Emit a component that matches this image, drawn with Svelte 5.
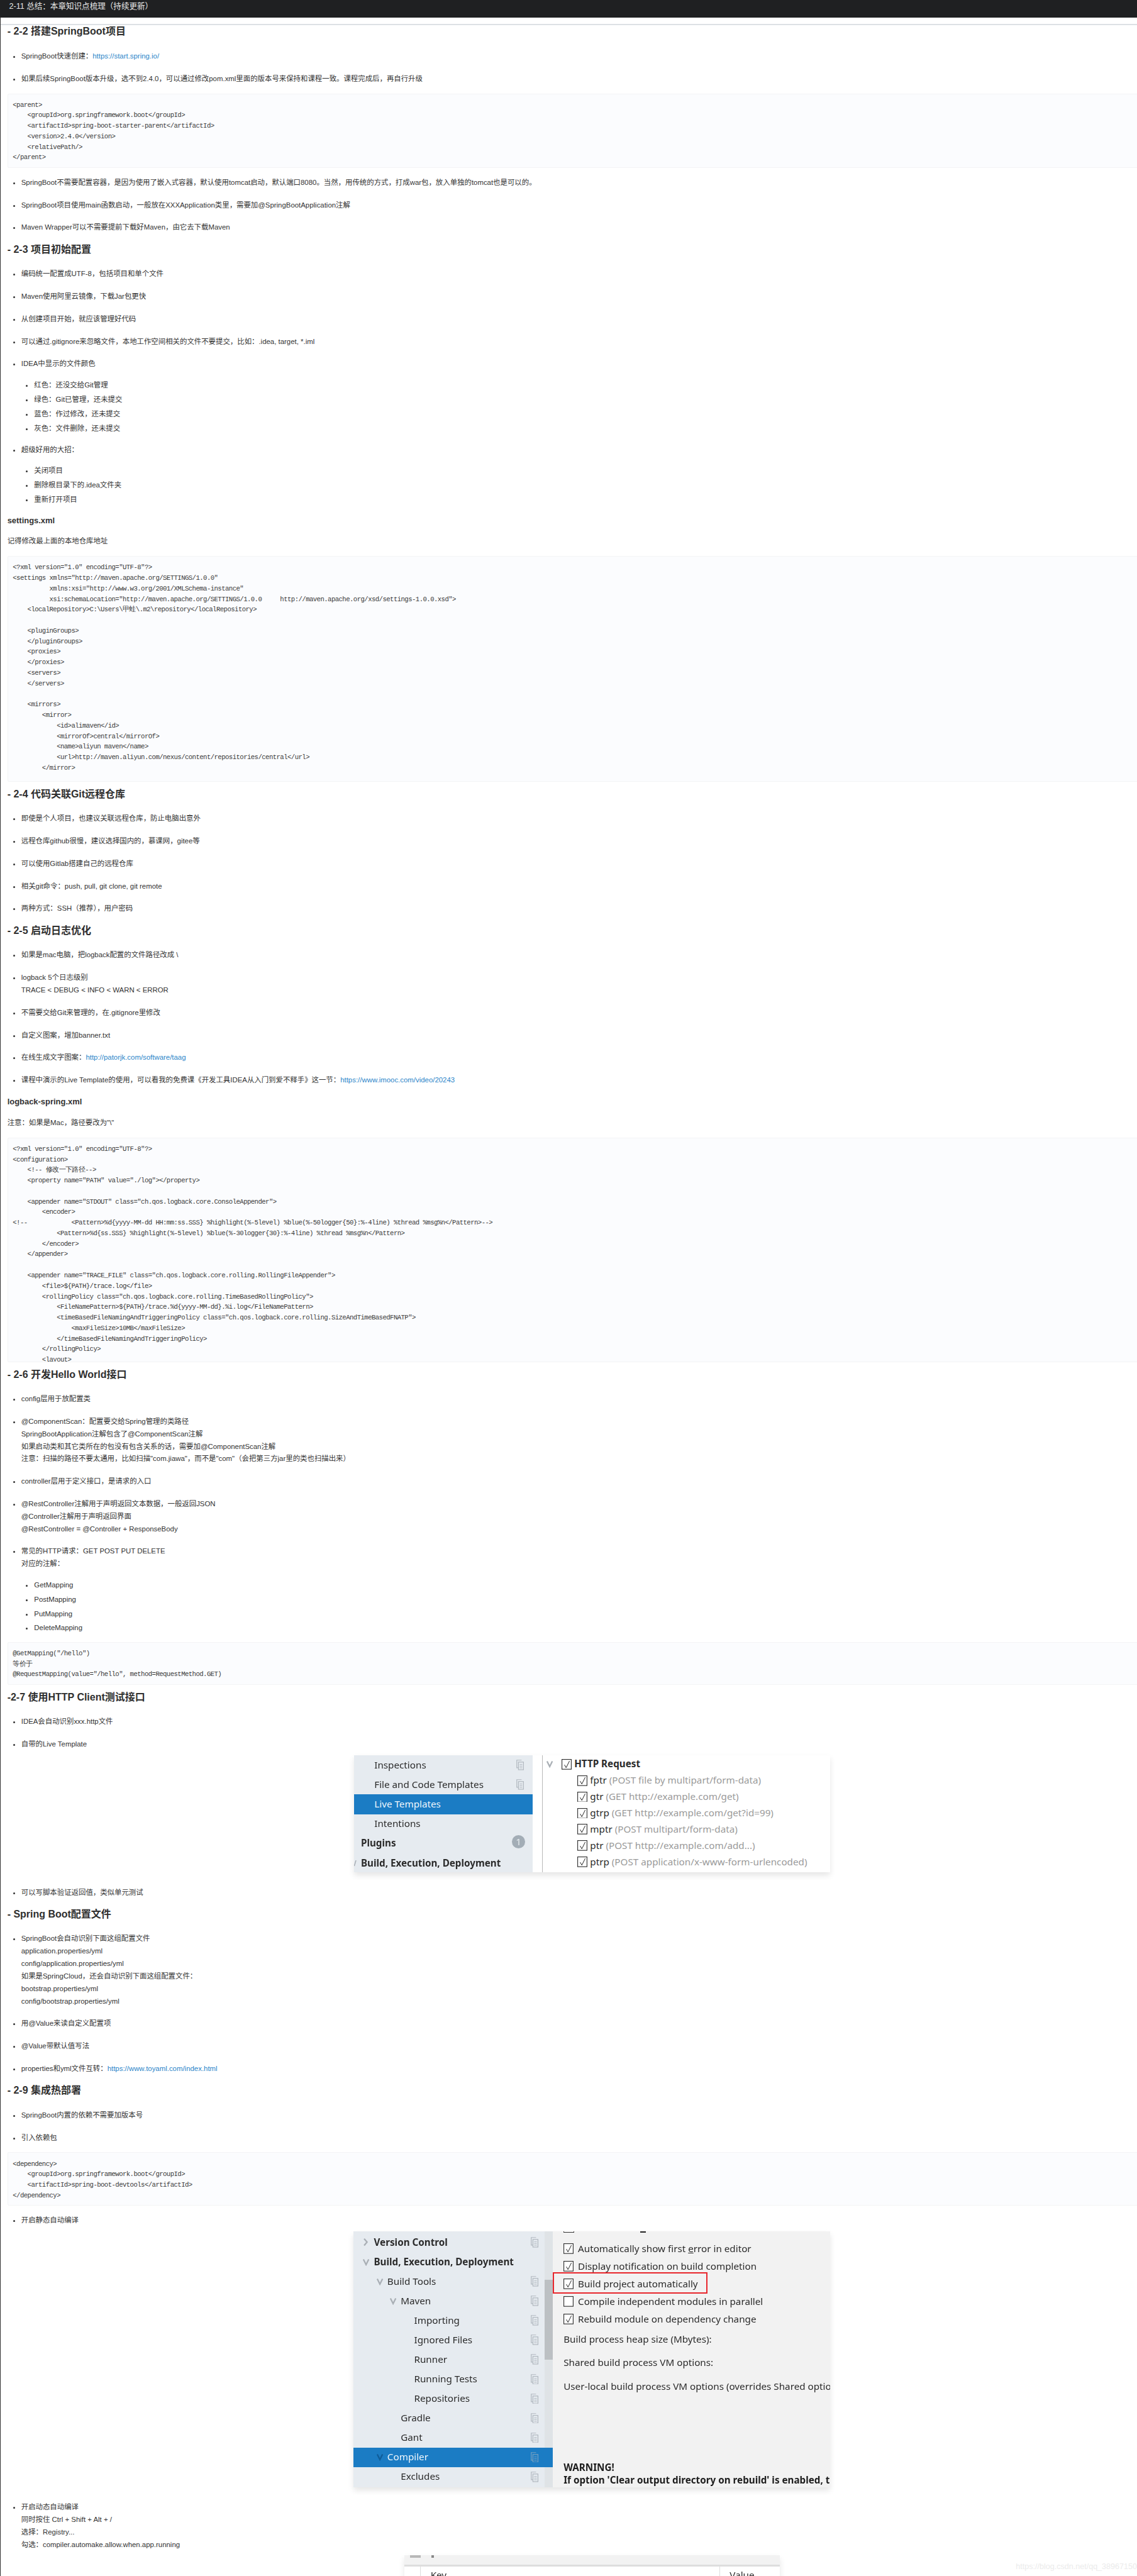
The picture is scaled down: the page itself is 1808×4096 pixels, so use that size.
<script>
	const parentXml = `<parent>
    <groupId>org.springframework.boot</groupId>
    <artifactId>spring-boot-starter-parent</artifactId>
    <version>2.4.0</version>
    <relativePath/>
</parent>`;

	const settingsXml = `<?xml version="1.0" encoding="UTF-8"?>
<settings xmlns="http://maven.apache.org/SETTINGS/1.0.0"
          xmlns:xsi="http://www.w3.org/2001/XMLSchema-instance"
          xsi:schemaLocation="http://maven.apache.org/SETTINGS/1.0.0     http://maven.apache.org/xsd/settings-1.0.0.xsd">
    <localRepository>C:\\Users\\甲蛙\\.m2\\repository</localRepository>

    <pluginGroups>
    </pluginGroups>
    <proxies>
    </proxies>
    <servers>
    </servers>

    <mirrors>
        <mirror>
            <id>alimaven</id>
            <mirrorOf>central</mirrorOf>
            <name>aliyun maven</name>
            <url>http://maven.aliyun.com/nexus/content/repositories/central</url>
        </mirror>`;

	const logbackXml = `<?xml version="1.0" encoding="UTF-8"?>
<configuration>
    <!-- 修改一下路径-->
    <property name="PATH" value="./log"></property>

    <appender name="STDOUT" class="ch.qos.logback.core.ConsoleAppender">
        <encoder>
<!--            <Pattern>%d{yyyy-MM-dd HH:mm:ss.SSS} %highlight(%-5level) %blue(%-50logger{50}:%-4line) %thread %msg%n</Pattern>-->
            <Pattern>%d{ss.SSS} %highlight(%-5level) %blue(%-30logger{30}:%-4line) %thread %msg%n</Pattern>
        </encoder>
    </appender>

    <appender name="TRACE_FILE" class="ch.qos.logback.core.rolling.RollingFileAppender">
        <file>\${PATH}/trace.log</file>
        <rollingPolicy class="ch.qos.logback.core.rolling.TimeBasedRollingPolicy">
            <FileNamePattern>\${PATH}/trace.%d{yyyy-MM-dd}.%i.log</FileNamePattern>
            <timeBasedFileNamingAndTriggeringPolicy class="ch.qos.logback.core.rolling.SizeAndTimeBasedFNATP">
                <maxFileSize>10MB</maxFileSize>
            </timeBasedFileNamingAndTriggeringPolicy>
        </rollingPolicy>
        <layout>`;

	const mappingCode = `@GetMapping("/hello")
等价于
@RequestMapping(value="/hello", method=RequestMethod.GET)`;

	const devtoolsXml = `<dependency>
    <groupId>org.springframework.boot</groupId>
    <artifactId>spring-boot-devtools</artifactId>
</dependency>`;

	const templateRows = [
		{ text: "Inspections", copy: true },
		{ text: "File and Code Templates", copy: true },
		{ text: "Live Templates", active: true },
		{ text: "Intentions" },
		{ text: "Plugins", bold: true, badge: true },
		{ text: "Build, Execution, Deployment", bold: true, cut: true }
	];

	const httpRows = [
		["fptr", "(POST file by multipart/form-data)"],
		["gtr", "(GET http://example.com/get)"],
		["gtrp", "(GET http://example.com/get?id=99)"],
		["mptr", "(POST multipart/form-data)"],
		["ptr", "(POST http://example.com/add...)"],
		["ptrp", "(POST application/x-www-form-urlencoded)"]
	];

	const compilerRows = [
		{ text: "Version Control", level: 0, arrow: "right", bold: true, copy: true },
		{ text: "Build, Execution, Deployment", level: 0, arrow: "down", bold: true },
		{ text: "Build Tools", level: 1, arrow: "down", copy: true },
		{ text: "Maven", level: 2, arrow: "down", copy: true },
		{ text: "Importing", level: 3, copy: true },
		{ text: "Ignored Files", level: 3, copy: true },
		{ text: "Runner", level: 3, copy: true },
		{ text: "Running Tests", level: 3, copy: true },
		{ text: "Repositories", level: 3, copy: true },
		{ text: "Gradle", level: 2, copy: true },
		{ text: "Gant", level: 2, copy: true },
		{ text: "Compiler", level: 1, arrow: "down", copy: true, active: true },
		{ text: "Excludes", level: 2, copy: true }
	];

	const buildOptions = [
		{ on: true, label: "Display notification on build completion" },
		{ on: true, label: "Build project automatically" },
		{ on: false, label: "Compile independent modules in parallel" },
		{ on: true, label: "Rebuild module on dependency change" }
	];
</script>

{#snippet box(on)}
	<svg class="box" viewBox="0 0 21 22">
		<rect x="0.75" y="0.75" width="19.5" height="20.5" fill="#fff" stroke="#333" stroke-width="1.5" />
		{#if on}
			<path d="M6 12 L9.5 18 L16.5 4" fill="none" stroke="#222" stroke-width="1.3" />
		{/if}
	</svg>
{/snippet}

{#snippet copy()}
	<svg class="copy" viewBox="0 0 16 22">
		<path d="M11 1H1v16h3" fill="none" stroke="#b2b9c0" stroke-width="1.6" />
		<rect x="4.5" y="5" width="10.5" height="16" fill="none" stroke="#b2b9c0" stroke-width="1.6" />
		<path d="M7 10h5.5M7 13.5h5.5M7 17h5.5" stroke="#b2b9c0" stroke-width="1.3" />
	</svg>
{/snippet}

{#snippet arrow(kind)}
	<svg class="arrow" viewBox="0 0 16 16">
		{#if kind === "down"}
			<path d="M2.5 2 L8 13 L13.5 2" fill="none" stroke="currentColor" stroke-width="3" />
		{:else}
			<path d="M4 1 L10 8 L4 15" fill="none" stroke="currentColor" stroke-width="3" />
		{/if}
	</svg>
{/snippet}

<div class="page">
	<header class="topbar">2-11 总结：本章知识点梳理（持续更新）</header>

	<main class="content">
		<h3 class="lead">- 2-2 搭建SpringBoot项目</h3>
		<ul>
			<li>SpringBoot快速创建：<a href="#top">https://start.spring.io/</a></li>
			<li>如果后续SpringBoot版本升级，选不到2.4.0，可以通过修改pom.xml里面的版本号来保持和课程一致。课程完成后，再自行升级</li>
		</ul>
		<pre class="code">{parentXml}</pre>
		<ul>
			<li>SpringBoot不需要配置容器，是因为使用了嵌入式容器，默认使用tomcat启动，默认端口8080。当然，用传统的方式，打成war包，放入单独的tomcat也是可以的。</li>
			<li>SpringBoot项目使用main函数启动，一般放在XXXApplication类里，需要加@SpringBootApplication注解</li>
			<li>Maven Wrapper可以不需要提前下载好Maven，由它去下载Maven</li>
		</ul>

		<h3>- 2-3 项目初始配置</h3>
		<ul>
			<li>编码统一配置成UTF-8，包括项目和单个文件</li>
			<li>Maven使用阿里云镜像，下载Jar包更快</li>
			<li>从创建项目开始，就应该管理好代码</li>
			<li>可以通过.gitignore来忽略文件，本地工作空间相关的文件不要提交，比如：.idea, target, *.iml</li>
			<li>IDEA中显示的文件颜色
				<ul>
					<li>红色：还没交给Git管理</li>
					<li>绿色：Git已管理，还未提交</li>
					<li>蓝色：作过修改，还未提交</li>
					<li>灰色：文件删除，还未提交</li>
				</ul>
			</li>
			<li>超级好用的大招：
				<ul>
					<li>关闭项目</li>
					<li>删除根目录下的.idea文件夹</li>
					<li>重新打开项目</li>
				</ul>
			</li>
		</ul>
		<h4>settings.xml</h4>
		<p>记得修改最上面的本地仓库地址</p>
		<pre class="code tall">{settingsXml}</pre>

		<h3>- 2-4 代码关联Git远程仓库</h3>
		<ul>
			<li>即使是个人项目，也建议关联远程仓库，防止电脑出意外</li>
			<li>远程仓库github很慢，建议选择国内的，慕课网，gitee等</li>
			<li>可以使用Gitlab搭建自己的远程仓库</li>
			<li>相关git命令：push, pull, git clone, git remote</li>
			<li>两种方式：SSH（推荐），用户密码</li>
		</ul>

		<h3>- 2-5 启动日志优化</h3>
		<ul>
			<li>如果是mac电脑，把logback配置的文件路径改成 \</li>
			<li>logback 5个日志级别<br />TRACE &lt; DEBUG &lt; INFO &lt; WARN &lt; ERROR</li>
			<li>不需要交给Git来管理的，在.gitignore里修改</li>
			<li>自定义图案，增加banner.txt</li>
			<li>在线生成文字图案：<a href="#top">http://patorjk.com/software/taag</a></li>
			<li>课程中演示的Live Template的使用，可以看我的免费课《开发工具IDEA从入门到爱不释手》这一节：<a href="#top">https://www.imooc.com/video/20243</a></li>
		</ul>
		<h4>logback-spring.xml</h4>
		<p>注意：如果是Mac，路径要改为"\"</p>
		<pre class="code clipped">{logbackXml}</pre>

		<h3>- 2-6 开发Hello World接口</h3>
		<ul>
			<li>config层用于放配置类</li>
			<li>@ComponentScan：配置要交给Spring管理的类路径<br />SpringBootApplication注解包含了@ComponentScan注解<br />如果启动类和其它类所在的包没有包含关系的话，需要加@ComponentScan注解<br />注意：扫描的路径不要太通用，比如扫描"com.jiawa"，而不是"com"（会把第三方jar里的类也扫描出来）</li>
			<li>controller层用于定义接口，是请求的入口</li>
			<li>@RestController注解用于声明返回文本数据，一般返回JSON<br />@Controller注解用于声明返回界面<br />@RestController = @Controller + ResponseBody</li>
			<li>常见的HTTP请求：GET POST PUT DELETE<br />对应的注解：
				<ul>
					<li>GetMapping</li>
					<li>PostMapping</li>
					<li>PutMapping</li>
					<li>DeleteMapping</li>
				</ul>
			</li>
		</ul>
		<pre class="code">{mappingCode}</pre>

		<h3>-2-7 使用HTTP Client测试接口</h3>
		<ul class="before-shot">
			<li>IDEA会自动识别xxx.http文件</li>
			<li>自带的Live Template</li>
		</ul>

		<figure class="shot shot-templates">
			<div class="side">
				{#each templateRows as row}
					<div class="row" class:active={row.active} class:bold={row.bold}>
						{#if row.cut}<svg class="cut" viewBox="0 0 5 12"><path d="M0.5 12 L4 0" stroke="#a9afb5" stroke-width="2" /></svg>{/if}
						<span>{row.text}</span>
						{#if row.copy}{@render copy()}{/if}
						{#if row.badge}<i class="badge">1</i>{/if}
					</div>
				{/each}
			</div>
			<div class="tree">
				<div class="tree-row group">
					{@render arrow("down")}
					{@render box(true)}
					<b>HTTP Request</b>
				</div>
				{#each httpRows as [name, desc]}
					<div class="tree-row">
						{@render box(true)}
						<span>{name} <em>{desc}</em></span>
					</div>
				{/each}
			</div>
		</figure>

		<ul>
			<li>可以写脚本验证返回值，类似单元测试</li>
		</ul>

		<h3>- Spring Boot配置文件</h3>
		<ul>
			<li>SpringBoot会自动识别下面这组配置文件<br />application.properties/yml<br />config/application.properties/yml<br />如果是SpringCloud，还会自动识别下面这组配置文件：<br />bootstrap.properties/yml<br />config/bootstrap.properties/yml</li>
			<li>用@Value来读自定义配置项</li>
			<li>@Value带默认值写法</li>
			<li>properties和yml文件互转：<a href="#top">https://www.toyaml.com/index.html</a></li>
		</ul>

		<h3>- 2-9 集成热部署</h3>
		<ul>
			<li>SpringBoot内置的依赖不需要加版本号</li>
			<li>引入依赖包</li>
		</ul>
		<pre class="code">{devtoolsXml}</pre>
		<ul class="before-shot">
			<li>开启静态自动编译</li>
		</ul>

		<figure class="shot shot-compiler">
			<div class="side">
				<div class="scroll"><span></span></div>
				{#each compilerRows as row}
					<div class="row level-{row.level}" class:active={row.active} class:bold={row.bold} class:plain={!row.arrow}>
						{#if row.arrow}{@render arrow(row.arrow)}{/if}
						<span>{row.text}</span>
						{#if row.copy}{@render copy()}{/if}
					</div>
				{/each}
			</div>
			<div class="options">
				<div class="cut-row"><i class="cut-box"></i><i class="cut-key"></i></div>
				<div class="opt first">{@render box(true)}<span>Automatically show first <u>e</u>rror in editor</span></div>
				{#each buildOptions as opt}
					<div class="opt">{@render box(opt.on)}<span>{opt.label}</span></div>
				{/each}
				<div class="field first">Build process heap size (Mbytes):</div>
				<div class="field second">Shared build process VM options:</div>
				<div class="field third">User-local build process VM options (overrides Shared options):</div>
				<div class="warning">WARNING!<br />If option 'Clear output directory on rebuild' is enabled, the</div>
				<div class="mark"></div>
			</div>
		</figure>

		<ul class="before-last">
			<li>开启动态自动编译<br />同时按住 Ctrl + Shift + Alt + /<br />选择：Registry...<br />勾选：compiler.automake.allow.when.app.running</li>
		</ul>

		<figure class="shot shot-registry">
			<div class="bar"><i></i><i class="small"></i></div>
			<div class="table-head"><span>Key</span><span>Value</span></div>
		</figure>
	</main>

	<span class="watermark">https://blog.csdn.net/qq_38967150</span>
</div>

<style>
	:global(body) {
		margin: 0;
		background: #fff;
	}

	/* written in the reference's pixels, then scaled down to the window */
	.page {
		zoom: 0.7619;
		position: relative;
		width: 2373px;
		height: 5377px;
		overflow: hidden;
		font-family: "Liberation Sans", "Noto Sans CJK SC", sans-serif;
		font-size: 15px;
		line-height: 26px;
		color: #333;
		background: #fff;
	}

	.topbar {
		height: 37px;
		padding-left: 19px;
		line-height: 28px;
		font-size: 16.5px;
		color: #e8e8e8;
		background: #1f2022;
	}

	.content {
		width: 2471px;
		min-height: 5340px;
		padding-top: 13px;
		box-sizing: border-box;
		border-left: 1px solid #333;
	}

	.content::before {
		content: "";
		display: block;
		height: 2px;
		background: #dde1e5;
	}

	h3 {
		margin: 9px 0 22px 14px;
		font-size: 21px;
		line-height: 34px;
		font-weight: bold;
		color: #2f2f2f;
	}

	h3.lead {
		margin-top: -3px;
	}

	h4 {
		margin: 0 0 18px 14px;
		padding-top: 4px;
		font-size: 17px;
		line-height: 26px;
		font-weight: bold;
	}

	p {
		margin: 0 0 0 14px;
	}

	ul {
		margin: 0 0 15px;
		padding: 0 0 0 43px;
		list-style: disc;
	}

	li + li {
		margin-top: 21px;
	}

	li ul {
		margin: 18px 0 -2px;
		padding-left: 27px;
	}

	li ul li + li {
		margin-top: 4px;
	}

	.before-shot {
		margin-bottom: 9px;
	}

	.before-last {
		margin-bottom: 8px;
	}

	a {
		color: #2b85c9;
		text-decoration: none;
	}

	.code {
		margin: 17px 0 0 14px;
		padding: 12px 10px 9px;
		font-family: "Liberation Mono", monospace;
		font-size: 14px;
		line-height: 22px;
		letter-spacing: -0.75px;
		color: #3a3a3a;
		background: #fbfcfe;
		border: 1px solid #f3f4f5;
		border-radius: 3px;
	}

	.code + ul {
		margin-top: 18px;
	}

	.tall {
		padding-bottom: 16px;
	}

	.clipped {
		height: 454px;
		padding-bottom: 0;
		overflow: hidden;
	}

	.shot {
		display: flex;
		margin: 0 0 29px 738px;
		overflow: hidden;
		font-family: "Noto Sans", "Liberation Sans", sans-serif;
		font-size: 20px;
		color: #2b2b2b;
		box-shadow: 0 6px 12px rgba(0, 0, 0, 0.1);
		filter: blur(0.3px);
	}

	.shot-templates {
		width: 993px;
		height: 245px;
	}

	.shot-compiler {
		width: 995px;
		height: 535px;
		margin-left: 736px;
	}

	.shot-registry {
		display: block;
		width: 783px;
		height: 90px;
		margin-left: 843px;
		background: #fff;
	}

	.side {
		position: relative;
		background: #e6ebf0;
	}

	.shot-templates .side {
		flex: none;
		width: 372px;
	}

	.shot-compiler .side {
		flex: none;
		width: 417px;
		padding-top: 3px;
		box-sizing: border-box;
	}

	.row {
		position: relative;
		display: flex;
		align-items: center;
		height: 41px;
		padding-left: 42px;
		white-space: nowrap;
	}

	.shot-compiler .row {
		height: 40.75px;
		padding-left: 0;
	}

	.shot-templates .bold {
		padding-left: 14px;
	}

	.bold {
		font-weight: bold;
	}

	.active {
		z-index: 1;
		color: #eef6fc;
		background: #1b7cc4;
	}

	.level-0 {
		padding-left: 19px !important;
	}

	.level-1 {
		padding-left: 47px !important;
	}

	.level-2 {
		padding-left: 75px !important;
	}

	.level-3 {
		padding-left: 103px !important;
	}

	.level-2.plain {
		padding-left: 99px !important;
	}

	.level-3.plain {
		padding-left: 127px !important;
	}

	.level-1.active .arrow {
		color: #0f5c99;
	}

	.arrow {
		flex: none;
		width: 16px;
		height: 16px;
		margin-right: 8px;
		color: #a9afb5;
	}

	.cut {
		position: absolute;
		left: 0;
		top: 15px;
		width: 5px;
		height: 12px;
	}

	.copy {
		position: absolute;
		right: 18px;
		top: 50%;
		width: 16px;
		height: 22px;
		margin-top: -11px;
	}

	.shot-compiler .copy {
		right: 30px;
	}

	.active .copy {
		opacity: 0.6;
	}

	.badge {
		position: absolute;
		right: 15px;
		top: 3px;
		width: 28px;
		height: 28px;
		border-radius: 50%;
		line-height: 28px;
		text-align: center;
		font-style: normal;
		font-weight: normal;
		color: #e6ebf0;
		background: #a3adb6;
	}

	.tree {
		flex: 1;
		padding-top: 2px;
		margin-left: 20px;
		border-left: 1px solid #b9b9b9;
		background: #fff;
		white-space: nowrap;
	}

	.tree-row {
		display: flex;
		align-items: center;
		gap: 6px;
		height: 34px;
		padding-left: 72px;
	}

	.tree-row.group {
		padding-left: 7px;
	}

	.tree-row .arrow {
		margin-right: 10px;
	}

	.tree-row em {
		font-style: normal;
		color: #9a9a9a;
	}

	.box {
		flex: none;
		width: 21px;
		height: 22px;
	}

	.scroll {
		position: absolute;
		right: 0;
		top: 0;
		bottom: 0;
		width: 18px;
		background: #dfe3e6;
	}

	.scroll span {
		display: block;
		height: 166px;
		margin-top: 102px;
		background: #bcc0c3;
	}

	.options {
		position: relative;
		display: flex;
		flex: 1;
		flex-direction: column;
		padding-left: 22px;
		overflow: hidden;
		white-space: nowrap;
		background: #f2f2f2;
	}

	.cut-row {
		position: relative;
		height: 3px;
	}

	.cut-box {
		display: block;
		width: 20px;
		height: 2px;
		border: 1.5px solid #333;
		border-top: 0;
		background: #fff;
	}

	.cut-key {
		position: absolute;
		left: 160px;
		top: 0;
		width: 12px;
		height: 3px;
		background: #222;
	}

	.opt {
		display: flex;
		align-items: center;
		gap: 9px;
		height: 36.75px;
		flex: none;
	}

	.opt.first {
		margin-top: 15.5px;
	}

	.field {
		flex: none;
		line-height: 26px;
	}

	.field.first {
		margin-top: 11px;
	}

	.field.second {
		margin-top: 22px;
	}

	.field.third {
		margin-top: 24px;
	}

	.warning {
		flex: none;
		margin-top: auto;
		padding-bottom: 2px;
		line-height: 27px;
		font-weight: bold;
		color: #1d1d1d;
	}

	.mark {
		position: absolute;
		left: -1px;
		top: 85px;
		width: 318px;
		height: 40px;
		border: 3px solid #e8262c;
	}

	.bar {
		display: flex;
		gap: 22px;
		height: 20px;
		padding-left: 12px;
		background: #f2f2f2;
		border-bottom: 4px solid #ddd;
	}

	.bar i {
		width: 22px;
		height: 5px;
		background: #b8b8b8;
	}

	.bar i.small {
		width: 5px;
		background: #888;
	}

	.table-head {
		display: grid;
		grid-template-columns: 623px 1fr;
		height: 66px;
		margin-left: 33px;
		line-height: 36px;
		border-left: 1px solid #ddd;
	}

	.table-head span {
		padding-left: 20px;
	}

	.table-head span + span {
		border-left: 1px solid #ddd;
	}

	.watermark {
		position: absolute;
		left: 2120px;
		top: 5345px;
		font-size: 16.5px;
		color: #ebebeb;
		white-space: nowrap;
	}
</style>
